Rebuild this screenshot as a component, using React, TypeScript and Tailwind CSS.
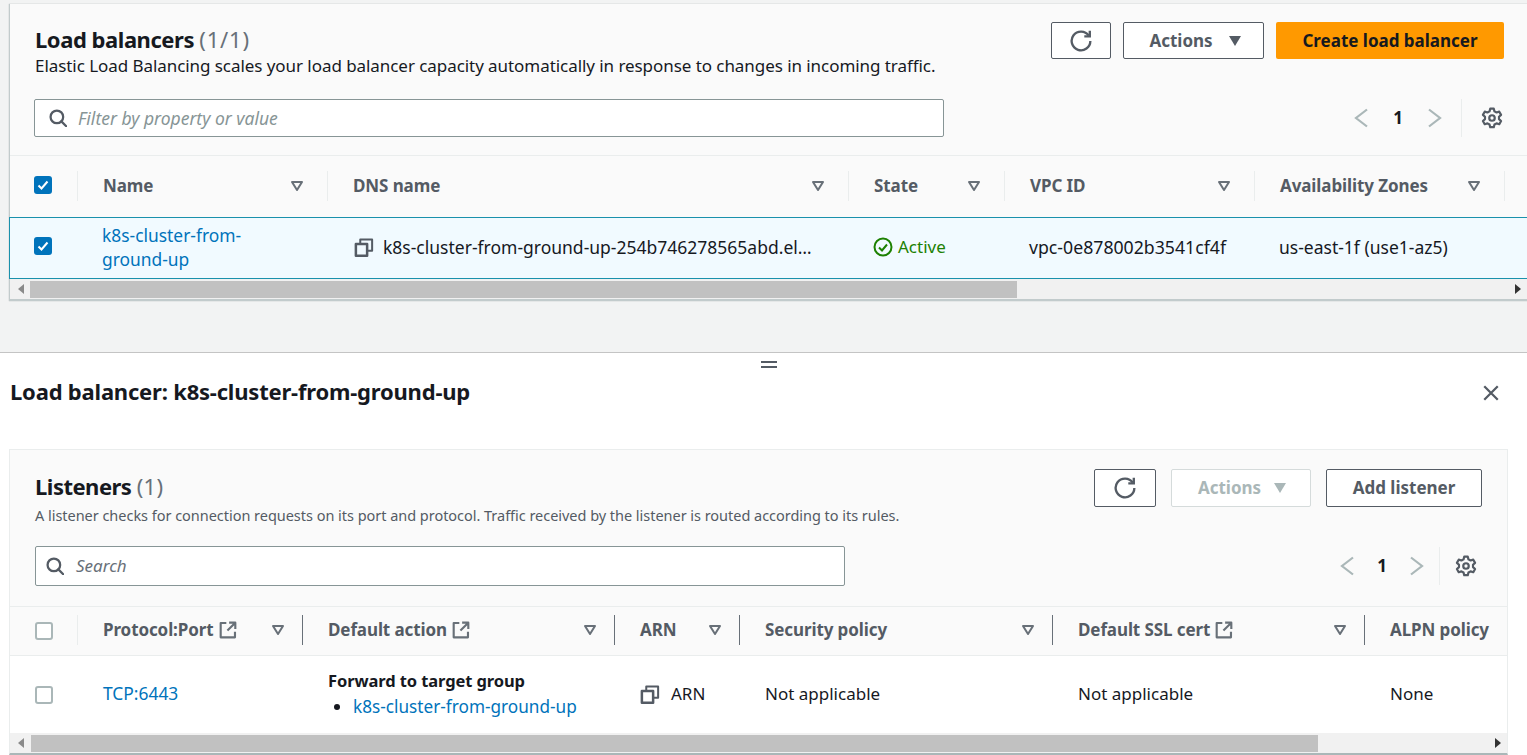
import type { ReactNode } from 'react';

const FONT = 'font-["Noto_Sans","Open_Sans",sans-serif]';

function Icon({ children, className = 'h-4 w-4' }: { children: ReactNode; className?: string }) {
    return (
        <svg
            viewBox="0 0 16 16"
            fill="none"
            stroke="currentColor"
            strokeWidth="2"
            strokeLinejoin="round"
            className={`shrink-0 ${className}`}
        >
            {children}
        </svg>
    );
}

const RefreshIcon = ({ className }: { className?: string }) => (
    <Icon className={className}>
        <path d="M14.800 8a6.800 6.800 0 1 1-1.200-3.900" strokeWidth="1.700" />
        <path d="M14.400 .6v4h-4" strokeLinejoin="miter" strokeWidth="1.700" />
    </Icon>
);

const SearchIcon = ({ className }: { className?: string }) => (
    <Icon className={className}>
        <circle cx="7" cy="7" r="5.600" />
        <path d="M11 11l4.400 4.400" strokeLinecap="round" />
    </Icon>
);

const CopyIcon = ({ className }: { className?: string }) => (
    <Icon className={className}>
        <path d="M1.500 5.500h9V15h-9z" />
        <path d="M5 5.500V2h9.500v9h-4" strokeWidth="1.600" />
    </Icon>
);

const GearIcon = ({ className }: { className?: string }) => (
    <Icon className={className}>
        <path
            d="M6.700 1.200h2.600l.5 2 1.500.8 2-.6 1.300 2.300-1.500 1.400v1.700l1.500 1.400-1.300 2.300-2-.6-1.500.8-.5 2H6.700l-.5-2-1.500-.8-2 .6-1.300-2.300 1.500-1.400V7.100L1.400 5.700l1.300-2.300 2 .6 1.500-.8z"
            strokeWidth="1.600"
        />
        <circle cx="8" cy="8" r="2" strokeWidth="1.600" />
    </Icon>
);

const ExternalIcon = () => (
    <Icon className="ml-[5px] h-[18px] w-[18px] text-[#687078]">
        <path d="M6.500 1.800H1.500v12.700h12.700V9.500" strokeWidth="1.900" />
        <path d="M9 1.500h5.500V7M14.500 1.500L7.500 8.500" strokeWidth="1.900" />
    </Icon>
);

const SortIcon = ({ className = '' }: { className?: string }) => (
    <svg viewBox="0 0 14 12" className={`ml-auto h-3 w-[14px] shrink-0 text-[#687078] ${className}`} fill="none">
        <path d="M2 2h10L7 10z" stroke="currentColor" strokeWidth="2" strokeLinejoin="round" />
    </svg>
);

const Caret = ({ className }: { className: string }) => (
    <svg viewBox="0 0 14 12" className={`h-3 w-[14px] shrink-0 ${className}`}>
        <path d="M1 1h12L7 11z" fill="currentColor" />
    </svg>
);

function Checkbox({ checked = false }: { checked?: boolean }) {
    if (!checked) {
        return <span className="mt-[2px] block h-[18px] w-[18px] rounded-[3px] border-2 border-[#aab7b8] bg-white" />;
    }
    return (
        <span className="mb-[2px] flex h-[18px] w-[18px] items-center justify-center rounded-[3px] bg-[#0073bb]">
            <svg viewBox="0 0 14 14" className="h-[14px] w-[14px]" fill="none">
                <path d="M2.500 7.500l3 3 6-7" stroke="white" strokeWidth="2" />
            </svg>
        </span>
    );
}

function HeaderCell({
    label,
    external,
    sortGap,
    dark,
    noSort,
}: {
    label: string;
    external?: boolean;
    sortGap: string;
    dark?: boolean;
    noSort?: boolean;
}) {
    return (
        <div className="flex h-full items-center pl-[25px]">
            <span className="whitespace-nowrap text-[17px] font-bold tracking-[-0.1px] text-[#545b64]">{label}</span>
            {external && <ExternalIcon />}
            {!noSort && <SortIcon className={sortGap} />}
            {!noSort && <span className={`h-[30px] w-px shrink-0 ${dark ? 'bg-[#687078]' : 'bg-[#eaeded]'}`} />}
        </div>
    );
}

function Scrollbar({ left, width }: { left: string; width: string }) {
    return (
        <div className="flex h-[20px] items-center bg-[#f1f1f1]">
            <svg viewBox="0 0 6 10" className="ml-[8px] h-[10px] w-[6px] shrink-0 text-[#8a8a8a]">
                <path d="M6 0v10L0 5z" fill="currentColor" />
            </svg>
            <div className={`h-[17px] shrink-0 bg-[#c1c1c1] ${left} ${width}`} />
            <svg viewBox="0 0 6 10" className="ml-auto mr-[6px] h-[10px] w-[6px] shrink-0 text-[#333]">
                <path d="M0 0v10l6-5z" fill="currentColor" />
            </svg>
        </div>
    );
}

function Pager({ pageGap, dividerGap, gearGap }: { pageGap: string; dividerGap: string; gearGap: string }) {
    return (
        <div className="ml-auto flex items-center">
            <svg viewBox="0 0 16 20" className="h-5 w-4 text-[#aab7b8]" fill="none">
                <path d="M14 1.500L3 10l11 8.500" stroke="currentColor" strokeWidth="2.200" />
            </svg>
            <span className={`text-[17px] font-bold text-[#16191f] ${pageGap}`}>1</span>
            <svg viewBox="0 0 16 20" className="h-5 w-4 text-[#aab7b8]" fill="none">
                <path d="M2 1.500L13 10 2 18.500" stroke="currentColor" strokeWidth="2.200" />
            </svg>
            <span className={`h-[38px] w-px bg-[#eaeded] ${dividerGap}`} />
            <GearIcon className={`h-[22px] w-[22px] text-[#545b64] ${gearGap}`} />
        </div>
    );
}

const outlineBtn = 'flex items-center justify-center rounded-[2px] border border-[#545b64] bg-white';

export default function App() {
    return (
        <div className={`${FONT} flex h-[755px] w-[1527px] flex-col overflow-hidden bg-[#f2f3f3] text-[17px] text-[#16191f]`}>
            {/* Load balancers table */}
            <section className="ml-[9px] mt-[4px] h-[297px] shrink-0 border-b-2 border-l border-[#aab7b8]/70 bg-[#fafafa] shadow-[0_0_1px_rgba(0,28,36,0.3)]">
                <div className="h-[152px] border-b border-[#eaeded] pt-[18px]">
                    <div className="flex h-[77px] pl-[25px] pr-[23px]">
                        <div className="pt-[4px]">
                            <h2 className="h-[27px] text-[22px] font-bold leading-[27px] tracking-[-0.45px]">
                                Load balancers <span className="font-normal tracking-[0.8px] text-[#687078]">(1/1)</span>
                            </h2>
                            <p className="mt-[2px] text-[17px] leading-[22px] tracking-[-0.06px]">
                                Elastic Load Balancing scales your load balancer capacity automatically in response to changes in incoming traffic.
                            </p>
                        </div>
                        <div className="ml-auto flex h-[37px] gap-3">
                            <button className={`${outlineBtn} w-[60px]`}>
                                <RefreshIcon className="h-[22px] w-[22px] text-[#545b64]" />
                            </button>
                            <button className={`${outlineBtn} w-[141px]`}>
                                <span className="flex items-center gap-[15px] pl-[4px] text-[17px] font-bold text-[#545b64]">
                                    Actions
                                    <Caret className="text-[#545b64]" />
                                </span>
                            </button>
                            <button className="flex w-[228px] items-center justify-center rounded-[2px] bg-[#ff9900] text-[17px] font-bold text-[#16191f]">
                                Create load balancer
                            </button>
                        </div>
                    </div>
                    <div className="flex items-center pl-[24px] pr-[24px]">
                        <div className="flex h-[38px] w-[910px] items-center rounded-[2px] border border-[#879596] bg-white pl-[14px]">
                            <SearchIcon className="h-[18px] w-[18px] text-[#545b64]" />
                            <span className="ml-[11px] text-[17.5px] italic text-[#879596]">Filter by property or value</span>
                        </div>
                        <Pager pageGap="mx-[24px]" dividerGap="ml-[18px]" gearGap="ml-[19px]" />
                    </div>
                </div>
                <div className="grid h-[61px] grid-cols-[68px_250px_521px_156px_250px_250px_1fr] items-center pb-[2px]">
                    <div className="flex h-full items-center pl-[24px]">
                        <Checkbox checked />
                        <span className="ml-[25px] h-[30px] w-px bg-[#eaeded]" />
                    </div>
                    <HeaderCell label="Name" sortGap="mr-[23px]" />
                    <HeaderCell label="DNS name" sortGap="mr-[23px]" />
                    <HeaderCell label="State" sortGap="mr-[23px]" />
                    <HeaderCell label="VPC ID" sortGap="mr-[23px]" />
                    <HeaderCell label="Availability Zones" sortGap="mr-[23px]" />
                </div>
                <div className="-ml-px grid h-[62px] grid-cols-[69px_250px_521px_156px_250px_250px_1fr] items-center border-y border-l border-[#1a91ac] bg-[#f1faff] pb-[2px]">
                    <div className="pl-[24px]">
                        <Checkbox checked />
                    </div>
                    <a className="pl-[23px] text-[17.4px] leading-[24px] text-[#0073bb]">
                        k8s-cluster-from-
                        <br />
                        ground-up
                    </a>
                    <div className="flex items-center pl-[25px]">
                        <CopyIcon className="h-5 w-5 text-[#545b64]" />
                        <span className="ml-[9px] whitespace-nowrap text-[17.5px]">k8s-cluster-from-ground-up-254b746278565abd.el…</span>
                    </div>
                    <div className="flex items-center pl-[23px] text-[#1d8102]">
                        <svg viewBox="0 0 20 20" className="h-5 w-5 shrink-0" fill="none" stroke="currentColor" strokeWidth="2">
                            <circle cx="10" cy="10" r="8.500" />
                            <path d="M6 10.500l3 3 5-6" />
                        </svg>
                        <span className="ml-[5px]">Active</span>
                    </div>
                    <span className="pl-[23px] text-[17.7px]">vpc-0e878002b3541cf4f</span>
                    <span className="whitespace-nowrap pl-[23px] text-[17.5px]">us-east-1f (use1-az5)</span>
                </div>
                <Scrollbar left="ml-[6px]" width="w-[987px]" />
            </section>

            {/* Split panel */}
            <section className="mt-[51px] flex min-h-0 flex-1 flex-col border-t border-[#c4c4c4] bg-white">
                <div className="flex h-[24px] shrink-0 justify-center pl-[11px] pt-[8px]">
                    <span className="h-[7px] w-[16px] border-y-2 border-[#545b64]" />
                </div>
                <div className="flex h-[28px] shrink-0 items-center pl-[10px] pr-[27px]">
                    <h2 className="text-[22px] font-bold tracking-[-0.2px]">Load balancer: k8s-cluster-from-ground-up</h2>
                    <svg viewBox="0 0 16 16" className="ml-auto mt-[4px] h-[18px] w-[18px] text-[#545b64]" fill="none">
                        <path d="M2 2l12 12M14 2L2 14" stroke="currentColor" strokeWidth="2" />
                    </svg>
                </div>

                {/* Listeners table */}
                <div className="ml-[9px] mt-[44px] w-[1499px] flex-1 border border-b-2 border-[#eaeded] border-b-[#aab7b8] bg-[#fafafa]">
                    <div className="h-[157px] border-b border-[#eaeded] pt-[19px]">
                        <div className="flex h-[77px] pl-[25px] pr-[25px]">
                            <div className="pt-[4px]">
                                <h2 className="h-[27px] text-[22px] font-bold leading-[27px] tracking-[-0.5px]">
                                    Listeners <span className="font-normal tracking-[0.3px] text-[#687078]">(1)</span>
                                </h2>
                                <p className="mt-[6px] text-[14.5px] leading-[19px] tracking-[-0.03px] text-[#545b64]">
                                    A listener checks for connection requests on its port and protocol. Traffic received by the listener is routed according to its rules.
                                </p>
                            </div>
                            <div className="ml-auto flex h-[38px] gap-[15px]">
                                <button className={`${outlineBtn} w-[62px]`}>
                                    <RefreshIcon className="h-[22px] w-[22px] text-[#545b64]" />
                                </button>
                                <button className="flex w-[140px] items-center justify-center rounded-[2px] border border-[#d5dbdb] bg-white">
                                    <span className="flex items-center gap-[12px] pl-[3px] text-[17px] font-bold text-[#aab7b8]">
                                        Actions
                                        <Caret className="text-[#aab7b8]" />
                                    </span>
                                </button>
                                <button className={`${outlineBtn} w-[156px] text-[17px] font-bold text-[#545b64]`}>Add listener</button>
                            </div>
                        </div>
                        <div className="flex items-center pl-[25px] pr-[30px]">
                            <div className="flex h-[40px] w-[810px] items-center rounded-[2px] border border-[#879596] bg-white pl-[10px]">
                                <SearchIcon className="h-[18px] w-[18px] text-[#545b64]" />
                                <span className="ml-[12px] text-[17px] italic text-[#687078]">Search</span>
                            </div>
                            <Pager pageGap="mx-[22px]" dividerGap="ml-[14px]" gearGap="ml-[15px]" />
                        </div>
                    </div>
                    <div className="grid h-[49px] grid-cols-[68px_225px_312px_125px_313px_312px_1fr] items-center border-b border-[#eaeded] pb-[2px]">
                        <div className="flex h-full items-center pl-[25px]">
                            <Checkbox />
                            <span className="ml-[24px] h-[30px] w-px bg-[#eaeded]" />
                        </div>
                        <HeaderCell label="Protocol:Port" external sortGap="mr-[17px]" dark />
                        <HeaderCell label="Default action" external sortGap="mr-[17px]" dark />
                        <HeaderCell label="ARN" sortGap="mr-[17px]" dark />
                        <HeaderCell label="Security policy" sortGap="mr-[17px]" dark />
                        <HeaderCell label="Default SSL cert" external sortGap="mr-[17px]" dark />
                        <HeaderCell label="ALPN policy" sortGap="" noSort />
                    </div>
                    <div className="grid h-[77px] grid-cols-[68px_225px_312px_125px_313px_312px_1fr] items-center bg-white pb-[2px]">
                        <div className="pl-[25px]">
                            <Checkbox />
                        </div>
                        <a className="pl-[25px] text-[17.4px] text-[#0073bb]">TCP:6443</a>
                        <div className="pl-[25px]">
                            <p className="text-[16.5px] font-bold leading-[26px] tracking-[-0.1px]">Forward to target group</p>
                            <ul className="list-disc pl-[25px] text-[17.2px] leading-[26px] text-[#0073bb] marker:text-[#16191f]">
                                <li>k8s-cluster-from-ground-up</li>
                            </ul>
                        </div>
                        <div className="flex items-center pl-[25px]">
                            <CopyIcon className="h-5 w-5 text-[#545b64]" />
                            <span className="ml-[11px]">ARN</span>
                        </div>
                        <span className="pl-[25px]">Not applicable</span>
                        <span className="pl-[25px]">Not applicable</span>
                        <span className="pl-[25px]">None</span>
                    </div>
                    <Scrollbar left="ml-[7px]" width="w-[1287px]" />
                </div>
            </section>
        </div>
    );
}
